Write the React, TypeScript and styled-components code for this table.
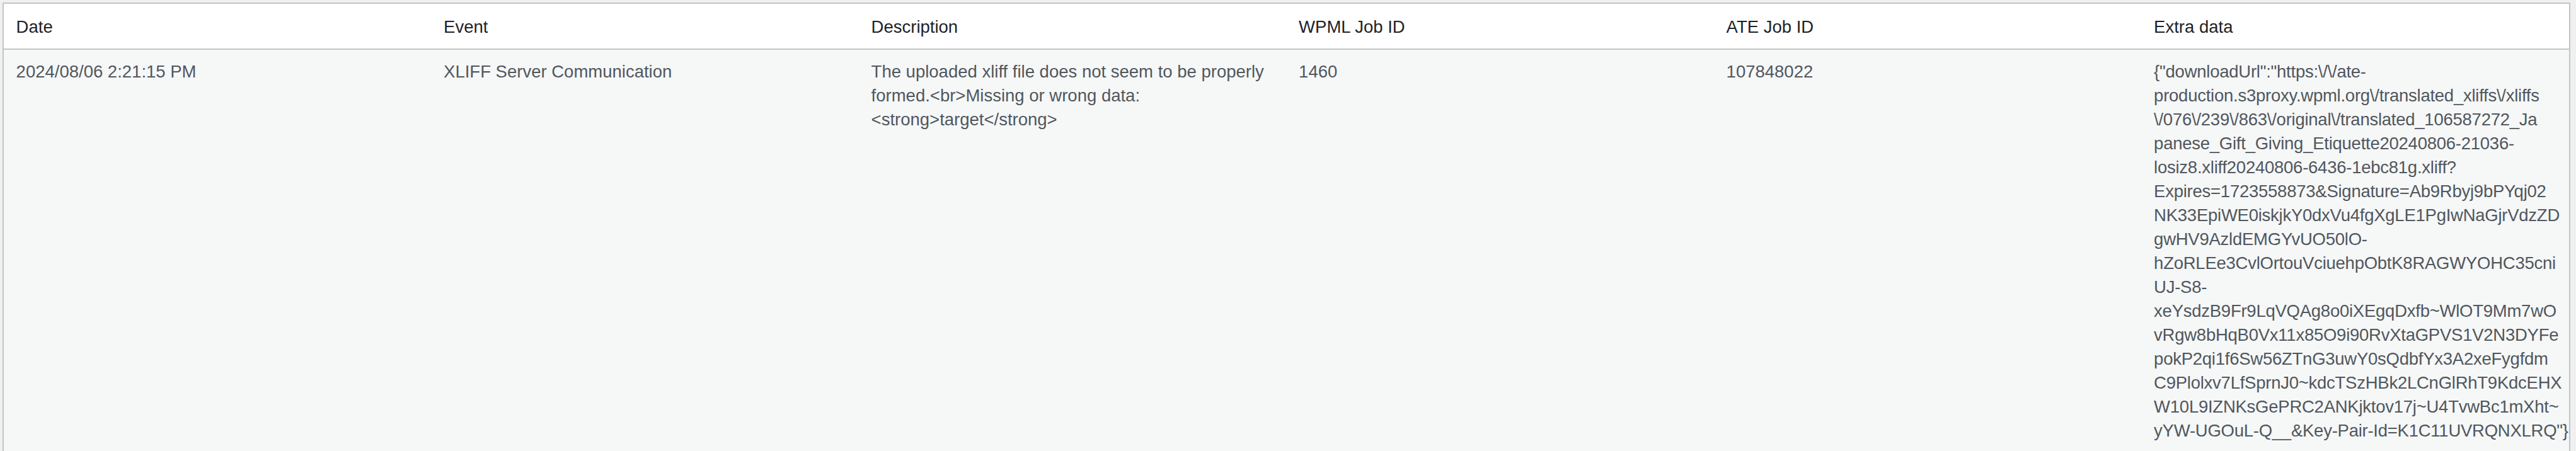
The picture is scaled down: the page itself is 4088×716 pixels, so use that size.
import React from "react";
import styled, { createGlobalStyle } from "styled-components";

const GlobalStyle = createGlobalStyle`
  html, body {
    margin: 0;
    padding: 0;
    background: #f0f0f1;
    font-family: "Liberation Sans", Arial, sans-serif;
  }
`;

const Page = styled.div`
  padding: 4px 9px 0 4px;
  background: #f0f0f1;
  min-height: 716px;
  box-sizing: border-box;
`;

const Table = styled.table`
  width: 100%;
  table-layout: fixed;
  border-collapse: separate;
  border-spacing: 0;
  border: 2px solid #c3c4c7;
  background: #fff;
  font-size: 27.5px;
`;

const HeadCell = styled.th`
  text-align: left;
  font-weight: 400;
  color: #1d2327;
  background: #fff;
  padding: 18px 19.6px 15px;
  line-height: 38px;
  border-bottom: 2px solid #c3c4c7;
  vertical-align: middle;
`;

const Row = styled.tr<{ $striped?: boolean }>`
  background: ${(p) => (p.$striped ? "#f6f7f7" : "#fff")};
`;

const Cell = styled.td`
  color: #50575e;
  padding: 16px 19.6px;
  line-height: 38px;
  vertical-align: top;
  overflow-wrap: break-word;
`;

const DataLine = styled.span`
  display: block;
  white-space: nowrap;
  letter-spacing: -0.25px;
`;

const headers = ["Date", "Event", "Description", "WPML Job ID", "ATE Job ID", "Extra data"];

const extraLines = [
  '{"downloadUrl":"https:\\/\\/ate-',
  "production.s3proxy.wpml.org\\/translated_xliffs\\/xliffs",
  "\\/076\\/239\\/863\\/original\\/translated_106587272_Ja",
  "panese_Gift_Giving_Etiquette20240806-21036-",
  "losiz8.xliff20240806-6436-1ebc81g.xliff?",
  "Expires=1723558873&Signature=Ab9Rbyj9bPYqj02",
  "NK33EpiWE0iskjkY0dxVu4fgXgLE1PgIwNaGjrVdzZD",
  "gwHV9AzldEMGYvUO50lO-",
  "hZoRLEe3CvlOrtouVciuehpObtK8RAGWYOHC35cni",
  "UJ-S8-",
  "xeYsdzB9Fr9LqVQAg8o0iXEgqDxfb~WlOT9Mm7wO",
  "vRgw8bHqB0Vx11x85O9i90RvXtaGPVS1V2N3DYFe",
  "pokP2qi1f6Sw56ZTnG3uwY0sQdbfYx3A2xeFygfdm",
  "C9Plolxv7LfSprnJ0~kdcTSzHBk2LCnGlRhT9KdcEHX",
  "W10L9IZNKsGePRC2ANKjktov17j~U4TvwBc1mXht~",
  'yYW-UGOuL-Q__&Key-Pair-Id=K1C11UVRQNXLRQ"}',
];

export default function App() {
  return (
    <>
      <GlobalStyle />
      <Page>
        <Table>
          <thead>
            <tr>
              {headers.map((h) => (
                <HeadCell key={h}>{h}</HeadCell>
              ))}
            </tr>
          </thead>
          <tbody>
            <Row $striped>
              <Cell>2024/08/06 2:21:15 PM</Cell>
              <Cell>XLIFF Server Communication</Cell>
              <Cell>
                The uploaded xliff file does not seem to be properly formed.&lt;br&gt;Missing or wrong data:
                &lt;strong&gt;target&lt;/strong&gt;
              </Cell>
              <Cell>1460</Cell>
              <Cell>107848022</Cell>
              <Cell>
                {extraLines.map((l, i) => (
                  <DataLine key={i}>{l}</DataLine>
                ))}
              </Cell>
            </Row>
          </tbody>
        </Table>
      </Page>
    </>
  );
}
